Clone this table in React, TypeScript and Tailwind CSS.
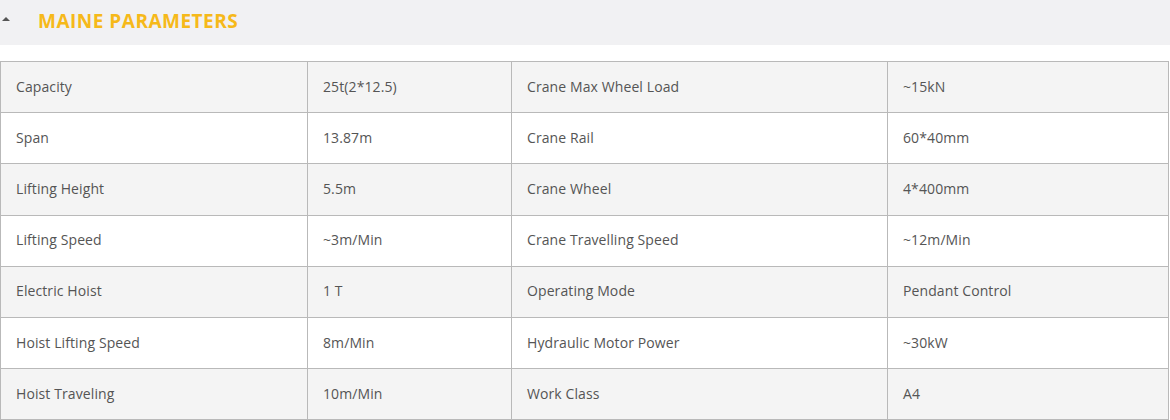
const rows: [string, string, string, string][] = [
  ["Capacity", "25t(2*12.5)", "Crane Max Wheel Load", "~15kN"],
  ["Span", "13.87m", "Crane Rail", "60*40mm"],
  ["Lifting Height", "5.5m", "Crane Wheel", "4*400mm"],
  ["Lifting Speed", "~3m/Min", "Crane Travelling Speed", "~12m/Min"],
  ["Electric Hoist", "1 T", "Operating Mode", "Pendant Control"],
  ["Hoist Lifting Speed", "8m/Min", "Hydraulic Motor Power", "~30kW"],
  ["Hoist Traveling", "10m/Min", "Work Class", "A4"],
];

export default function App() {
  return (
    <div className="w-[1170px] bg-white font-['Open_Sans',sans-serif]">
      {/* Section header */}
      <div className="relative flex h-[45px] items-center bg-[#f1f1f3] pl-[38px]">
        <span className="absolute left-[2px] top-[17px] h-0 w-0 border-x-[4px] border-b-[4px] border-x-transparent border-b-[#555]" />
        <h2 className="-mt-[3px] text-[19px] font-bold tracking-[0.5px] text-[#f6b91a]">MAINE PARAMETERS</h2>
      </div>

      {/* Parameter table */}
      <div className="mt-[16px] pr-px">
        <table className="w-full table-fixed border-collapse text-[14px] tracking-[0.1px] text-[#555]">
          <colgroup>
            <col className="w-[307px]" />
            <col className="w-[204px]" />
            <col className="w-[376px]" />
            <col />
          </colgroup>
          <tbody>
            {rows.map((r, i) => (
              <tr key={r[0]} className={i % 2 === 0 ? "bg-[#f4f4f4]" : "bg-white"}>
                {r.map((c, j) => (
                  <td key={j} className="h-[51.2px] border border-[#b9b9b9] px-[15px] pb-[2px] align-middle">
                    {c}
                  </td>
                ))}
              </tr>
            ))}
          </tbody>
        </table>
      </div>
    </div>
  );
}
